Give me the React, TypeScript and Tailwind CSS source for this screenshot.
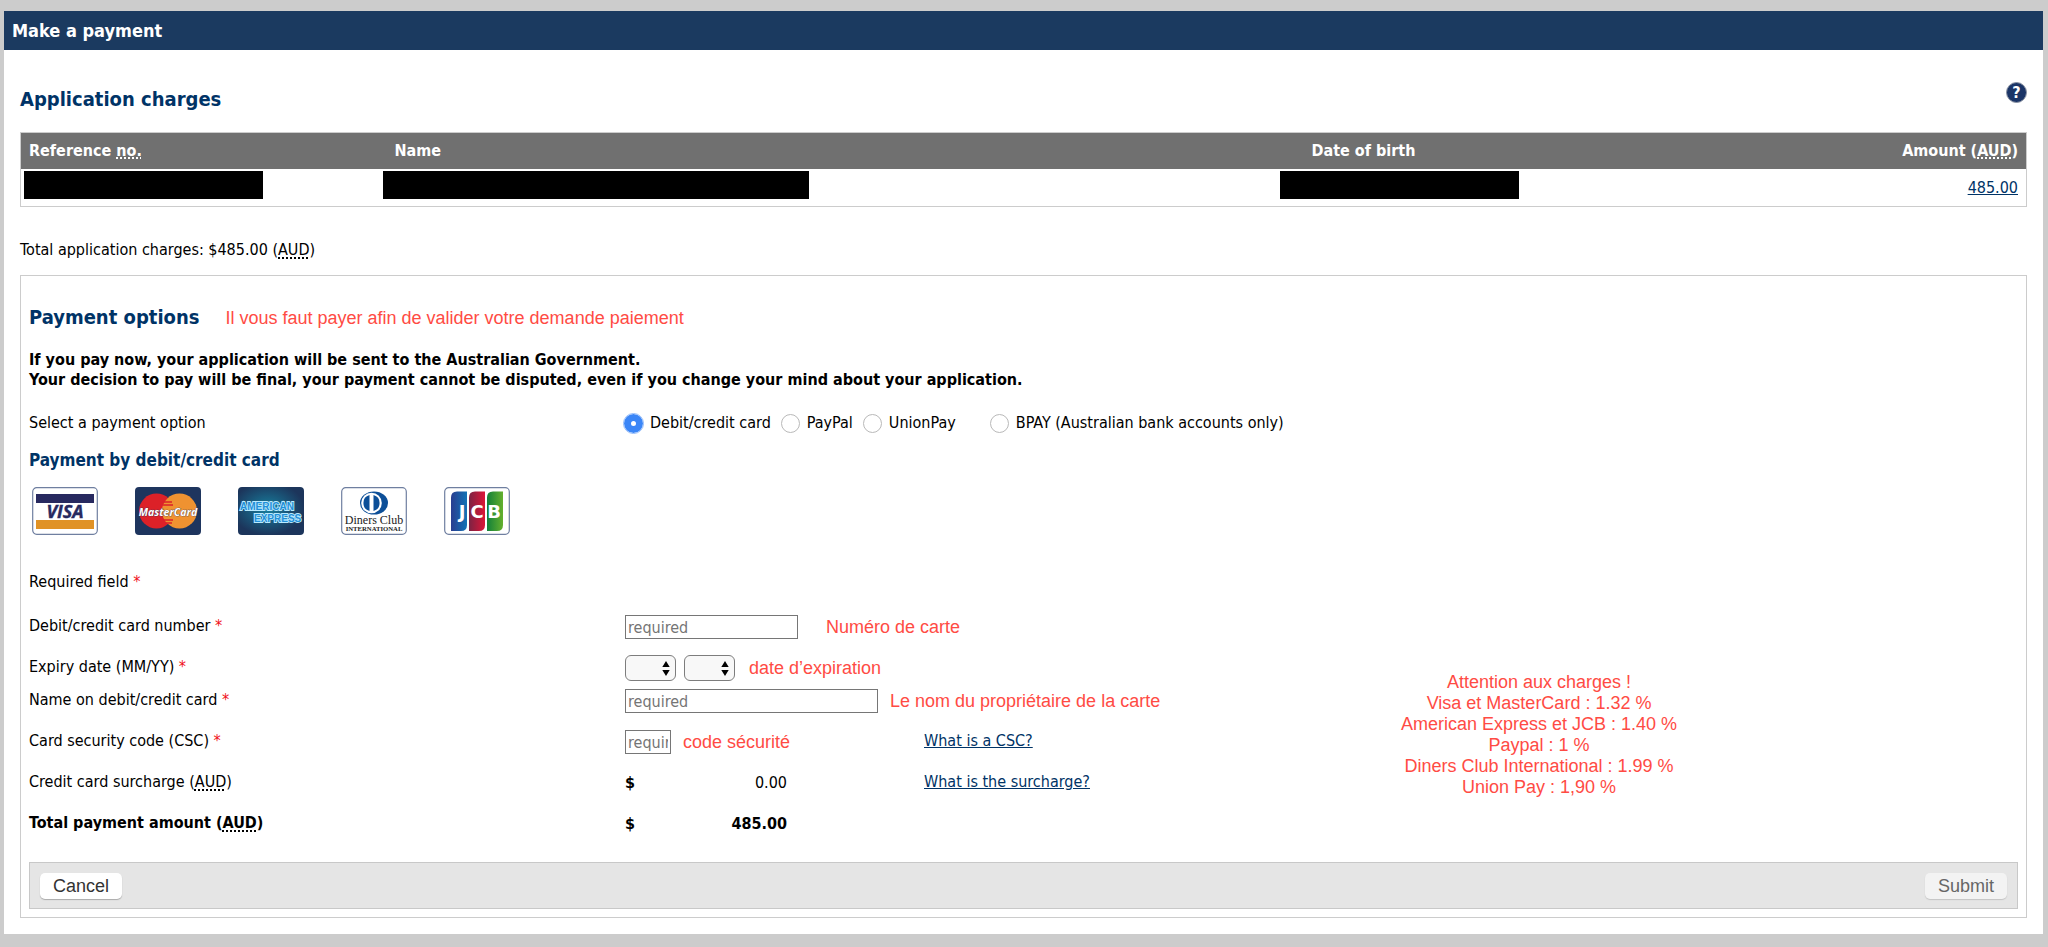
import type { ReactNode } from 'react'

function Note({ children }: { children: ReactNode }) {
  return <span className="font-['Liberation_Sans',Arial,sans-serif] text-lg leading-[26px] whitespace-nowrap text-[#ff4b44]">{children}</span>
}

const abbrClass = 'underline decoration-dotted decoration-2 underline-offset-2'

function Aud() {
  return (
    <>
      (<abbr title="Australian dollars" className={abbrClass}>AUD</abbr>)
    </>
  )
}

function Star() {
  return <span className="text-[#f01020]">*</span>
}

function Row({ label, htmlFor, children, link, tight, bold }: { label: ReactNode; htmlFor?: string; children: ReactNode; link?: string; tight?: boolean; bold?: boolean }) {
  return (
    <div className={`flex items-start leading-[26px] ${tight ? 'h-[33px]' : 'h-[41px]'} ${bold ? 'font-bold' : ''}`}>
      {htmlFor ? (
        <label htmlFor={htmlFor} className="w-[596px] shrink-0">{label}</label>
      ) : (
        <span className="w-[596px] shrink-0">{label}</span>
      )}
      <div className="flex w-[299px] shrink-0 items-center pt-px">{children}</div>
      {link && <a href="#help" className="whitespace-nowrap text-[#003366] underline">{link}</a>}
    </div>
  )
}

const inputClass = 'h-6 border border-[#767676] bg-white px-0.5 text-base leading-5 text-black placeholder:text-[#757575] outline-none'

function TinySelect({ id, label }: { id: string; label: string }) {
  return (
    <span className="relative inline-block h-[26px] w-[51px]">
      <select id={id} aria-label={label} className="block h-[26px] w-[51px] appearance-none rounded-md border border-[#7d7d7d] bg-[#f8f8f8]">
        <option value=""></option>
        <option value="01">01</option>
      </select>
      <svg className="pointer-events-none absolute top-1.5 right-1.5" width="8" height="15" viewBox="0 0 8 15" aria-hidden="true">
        <path d="M4 0 7.700 6H.300ZM4 15 .300 9h7.400z" fill="#000" />
      </svg>
    </span>
  )
}

function Radio({ label, checked }: { label: string; checked?: boolean }) {
  return (
    <label className="flex items-center gap-[7px] whitespace-nowrap">
      <input
        type="radio"
        name="option"
        defaultChecked={checked}
        className="size-[19px] appearance-none rounded-full border border-[#b9b9b9] bg-white checked:border-[7px] checked:border-[#3b86f7] checked:outline-1 checked:outline-[#8fb9fa]"
      />
      {label}
    </label>
  )
}

function Visa() {
  return (
    <svg width="66" height="48" viewBox="0 0 66 48" role="img" aria-label="Visa">
      <rect x=".7" y=".7" width="64.600" height="46.600" rx="4" fill="#fff" stroke="#6f7fa0" strokeWidth="1.200" />
      <rect x="4" y="7" width="58" height="9" fill="#27295f" />
      <rect x="4" y="33" width="58" height="9" fill="#e09226" />
      <text x="33" y="31" textAnchor="middle" fontFamily="Open Sans" fontWeight="700" fontStyle="italic" fontSize="18" fill="#27295f" stroke="#27295f" strokeWidth=".4">VISA</text>
    </svg>
  )
}

function MasterCard() {
  return (
    <svg width="66" height="48" viewBox="0 0 66 48" role="img" aria-label="MasterCard">
      <rect width="66" height="48" rx="4" fill="#1e355e" />
      <circle cx="21.500" cy="24" r="17.500" fill="#dc2128" />
      <circle cx="44.500" cy="24" r="17.500" fill="#ef9231" />
      <path d="M29 15h8M28 18h10M28 33h10M29 36h8" stroke="#dc2128" strokeWidth="1.500" />
      <text x="33" y="28.500" textAnchor="middle" fontFamily="Open Sans" fontWeight="700" fontStyle="italic" fontSize="10.500" fill="#fff" stroke="#1e355e" strokeWidth=".6" paintOrder="stroke">MasterCard</text>
    </svg>
  )
}

function Amex() {
  return (
    <svg width="66" height="48" viewBox="0 0 66 48" role="img" aria-label="American Express">
      <defs>
        <radialGradient id="amex" cx=".45" cy=".45" r=".55">
          <stop offset="0" stopColor="#17809f" />
          <stop offset="1" stopColor="#1c355b" />
        </radialGradient>
      </defs>
      <rect width="66" height="48" rx="4" fill="url(#amex)" />
      <g fontFamily="Liberation Sans" fontWeight="700" fontSize="10" fill="#1f8fd8" stroke="#b9eaff" strokeWidth="1.800" paintOrder="stroke">
        <text x="2" y="22.500">AMERICAN</text>
        <text x="16" y="35">EXPRESS</text>
      </g>
    </svg>
  )
}

function Diners() {
  return (
    <svg width="66" height="48" viewBox="0 0 66 48" role="img" aria-label="Diners Club International">
      <rect x=".7" y=".7" width="64.600" height="46.600" rx="4" fill="#fff" stroke="#6f7fa0" strokeWidth="1.200" />
      <ellipse cx="33" cy="16" rx="14" ry="11.500" fill="#0c4f98" />
      <circle cx="30.500" cy="16" r="10.300" fill="#fff" />
      <path d="M28.500 8a8.300 8.300 0 0 0 0 16zM32.500 8a8.300 8.300 0 0 1 0 16z" fill="#0c4f98" />
      <g fontFamily="Liberation Serif" fill="#222" textAnchor="middle">
        <text x="33" y="36.500" fontSize="12">Diners Club</text>
        <text x="33" y="43.500" fontSize="6.700" fontWeight="700">INTERNATIONAL</text>
      </g>
    </svg>
  )
}

function Jcb() {
  return (
    <svg width="66" height="48" viewBox="0 0 66 48" role="img" aria-label="JCB">
      <defs>
        <linearGradient id="jb"><stop stopColor="#2a3d90" /><stop offset="1" stopColor="#1273b5" /></linearGradient>
        <linearGradient id="jr"><stop stopColor="#7c2343" /><stop offset="1" stopColor="#dc1638" /></linearGradient>
        <linearGradient id="jg"><stop stopColor="#138039" /><stop offset="1" stopColor="#64b02e" /></linearGradient>
      </defs>
      <rect x=".7" y=".7" width="64.600" height="46.600" rx="4" fill="#fff" stroke="#6f7fa0" strokeWidth="1.200" />
      <path d="M13 4.500h10V38q0 6-6 6H7V10.500q0-6 6-6Z" fill="url(#jb)" />
      <path d="M31 4.500h10V38q0 6-6 6h-10V10.500q0-6 6-6Z" fill="url(#jr)" />
      <path d="M49 4.500h10V38q0 6-6 6h-10V10.500q0-6 6-6Z" fill="url(#jg)" />
      <g textAnchor="middle" fontFamily="DejaVu Sans" fontWeight="700" fontSize="18" fill="#fff">
        <text x="18" y="31">J</text>
        <text x="33" y="31">C</text>
        <text x="50" y="31">B</text>
      </g>
    </svg>
  )
}

export default function App() {
  return (
    <main className="min-h-screen bg-[#cccccc] pt-[11px] pr-[5px] pb-[13px] pl-1 font-['DejaVu_Sans_Condensed','DejaVu_Sans',sans-serif] text-base text-black">
      <div className="bg-white">
        <h1 className="bg-[#1b3a60] px-2 text-lg leading-[39px] font-bold text-white">Make a payment</h1>
        <div className="px-4 pt-8 pb-4">
          <div className="flex h-[50px] items-start justify-between">
            <h2 className="text-xl leading-[34px] font-bold text-[#003366]">Application charges</h2>
            <button type="button" aria-label="Help" className="flex size-[21px] items-center justify-center rounded-full border border-[#8b93a3] bg-[#1b3567] text-base leading-none font-bold text-white">?</button>
          </div>
          <table className="w-full table-fixed border border-[#cccccc] text-left">
            <colgroup>
              <col className="w-[362px]" />
              <col className="w-[897px]" />
              <col className="w-[320px]" />
              <col />
            </colgroup>
            <thead>
              <tr className="h-9 bg-[#707070] text-white">
                <th className="px-2">Reference <abbr title="number" className={abbrClass}>no.</abbr></th>
                <th className="px-3">Name</th>
                <th className="px-8">Date of birth</th>
                <th className="px-2 text-right">Amount <Aud /></th>
              </tr>
            </thead>
            <tbody>
              <tr className="h-[38px]">
                <td className="px-[3px] pb-1"><div className="h-7 w-[239px] bg-black" /></td>
                <td className="pb-1"><div className="h-7 w-[426px] bg-black" /></td>
                <td className="pb-1"><div className="h-7 w-[239px] bg-black" /></td>
                <td className="px-2 pt-0.5 text-right"><a href="#amount" className="text-[#003366] underline">485.00</a></td>
              </tr>
            </tbody>
          </table>
          <p className="pt-[31px] pb-[13px] leading-6">Total application charges: $485.00 <Aud /></p>
          <form className="border border-[#cccccc] px-2 pb-2" onSubmit={(e) => e.preventDefault()}>
            <div className="flex items-baseline gap-[26px] pt-7 leading-[26px]">
              <h2 className="text-xl leading-[26px] font-bold text-[#003366]">Payment options</h2>
              <Note>Il vous faut payer afin de valider votre demande paiement</Note>
            </div>
            <p className="pt-[19px] leading-5 font-bold">
              If you pay now, your application will be sent to the Australian Government.
              <br />
              Your decision to pay will be final, your payment cannot be disputed, even if you change your mind about your application.
            </p>
            <div className="flex pt-5 leading-[26px]">
              <span className="w-[595px] shrink-0">Select a payment option</span>
              <div role="radiogroup" aria-label="Select a payment option" className="flex gap-[10px]">
                <Radio label="Debit/credit card" checked />
                <Radio label="PayPal" />
                <Radio label="UnionPay" />
                <span className="w-[14px]" />
                <Radio label="BPAY (Australian bank accounts only)" />
              </div>
            </div>
            <h3 className="pt-3 text-[17px] leading-6 font-bold text-[#003366]">Payment by debit/credit card</h3>
            <div className="flex gap-[37px] pt-[15px] pl-[3px]">
              <Visa />
              <MasterCard />
              <Amex />
              <Diners />
              <Jcb />
            </div>
            <p className="pt-[34px] pb-[18px] leading-[26px]">Required field <Star /></p>
            <div className="flex">
              <div className="w-[1372px] shrink-0">
                <Row label={<>Debit/credit card number <Star /></>} htmlFor="number">
                  <input id="number" placeholder="required" className={`${inputClass} mr-7 w-[173px] shrink-0`} />
                  <Note>Numéro de carte</Note>
                </Row>
                <Row label={<>Expiry date (MM/YY) <Star /></>} htmlFor="month" tight>
                  <span className="mr-[14px] flex gap-2">
                    <TinySelect id="month" label="Expiry month" />
                    <TinySelect id="year" label="Expiry year" />
                  </span>
                  <Note>date d’expiration</Note>
                </Row>
                <Row label={<>Name on debit/credit card <Star /></>} htmlFor="name">
                  <input id="name" placeholder="required" className={`${inputClass} mr-3 w-[253px] shrink-0`} />
                  <Note>Le nom du propriétaire de la carte</Note>
                </Row>
                <Row label={<>Card security code (CSC) <Star /></>} htmlFor="csc" link="What is a CSC?">
                  <input id="csc" placeholder="required" className={`${inputClass} mr-3 w-[46px] shrink-0`} />
                  <Note>code sécurité</Note>
                </Row>
                <Row label={<>Credit card surcharge <Aud /></>} link="What is the surcharge?">
                  <span className="flex w-[162px] justify-between"><b>$</b><span>0.00</span></span>
                </Row>
                <Row label={<>Total payment amount <Aud /></>} bold>
                  <span className="flex w-[162px] justify-between"><span>$</span><span>485.00</span></span>
                </Row>
              </div>
              <aside className="pt-[59px] text-center font-['Liberation_Sans',Arial,sans-serif] text-lg leading-[21px] whitespace-nowrap text-[#ff4b44]">
                <p>Attention aux charges !</p>
                <p>Visa et MasterCard : 1.32 %</p>
                <p>American Express et JCB : 1.40 %</p>
                <p>Paypal : 1 %</p>
                <p>Diners Club International : 1.99 %</p>
                <p>Union Pay : 1,90 %</p>
              </aside>
            </div>
            <div className="mt-[11px] flex h-[47px] items-center justify-between border border-[#c8c8c8] bg-[#e5e5e5] px-[10px] font-['Liberation_Sans',Arial,sans-serif] text-lg leading-6">
              <button type="button" className="h-[26px] w-[82px] rounded-[5px] bg-white text-[#333333] shadow-[0_1px_1px_#aaaaaa]">Cancel</button>
              <button type="submit" disabled className="h-[26px] w-[82px] rounded-[5px] bg-[#f3f3f3] text-[#666666] shadow-[0_1px_1px_#c4c4c4]">Submit</button>
            </div>
          </form>
        </div>
      </div>
    </main>
  )
}
